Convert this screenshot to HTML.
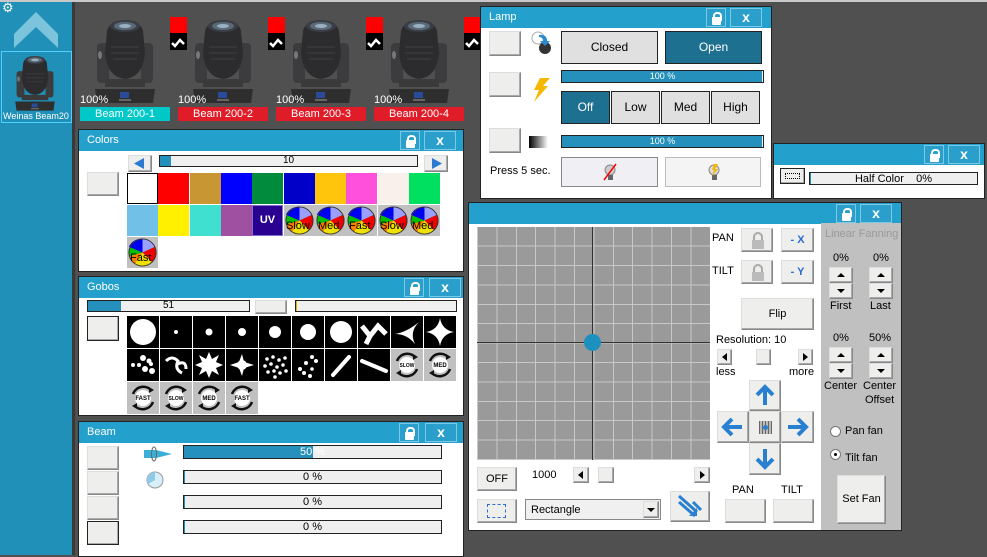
<!DOCTYPE html>
<html><head><meta charset="utf-8"><style>
*{box-sizing:border-box;margin:0;padding:0}
body{width:987px;height:555px;overflow:hidden;background:#505050;font-family:"Liberation Sans",sans-serif;font-size:11px;position:relative;color:#000}
.a{position:absolute}
.panel{position:absolute;background:#fff;border:1px solid #222}
.tb{position:absolute;left:0;right:0;top:0;height:21px;background:#24a0cc;color:#fff;font-size:11px;padding:4px 0 0 8px}
.lk{position:absolute;top:1px;width:20px;height:19px;background:#2a9fcc;border:1px solid #7fc8e4}
.lk:after{content:"";position:absolute;left:5px;top:8px;width:9px;height:8px;background:#fff;border-radius:1px}
.lk:before{content:"";position:absolute;left:6px;top:3px;width:5px;height:7px;border:2px solid #fff;border-bottom:none;border-radius:4px 4px 0 0}
.cx{position:absolute;top:1px;width:32px;height:19px;background:#2a9fcc;border:1px solid #7fc8e4;color:#fff;font-weight:bold;font-size:14px;text-align:center;line-height:17px}
.btn{position:absolute;background:#eeeeec;border:1px solid #888;border-top-color:#ddd;border-left-color:#ddd;box-shadow:inset -1px -1px 0 #aaa}
.bar{position:absolute;background:#efefef;border:1px solid #222;text-align:center;font-size:10px;line-height:10px}
.bar i{position:absolute;left:0;top:0;bottom:0;background:#2490bb}
.bar span{position:relative}
.sw{position:absolute;width:31px;height:31px}
.gb{position:absolute;width:32px;height:32px;background:#000}
.gr{position:absolute;width:32px;height:32px;background:#c0c0c0}
.tx{position:absolute;white-space:nowrap}
.lb{position:absolute;width:90px;height:14px;color:#fff;font-size:11px;text-align:center;line-height:14px}
</style></head><body>
<svg width="0" height="0" style="position:absolute"><defs>
<symbol id="lamp" viewBox="0 0 64 88">
<path d="M4 30 q0 -4 6 -4 l6 0 l0 40 l-8 0 q-4 0 -4 -6z" fill="#3c3c3e"/>
<path d="M60 30 q0 -4 -6 -4 l-6 0 l0 40 l8 0 q4 0 4 -6z" fill="#3c3c3e"/>
<ellipse cx="7" cy="38" rx="2" ry="4" fill="#777"/>
<path d="M14 14 q2 -10 18 -10 q16 0 18 10 l2 22 q-2 24 -20 26 q-18 -2 -20 -26z" fill="#2c2c2e"/>
<ellipse cx="32" cy="9" rx="15" ry="6" fill="#3a3e44"/>
<ellipse cx="32" cy="9" rx="11" ry="4" fill="#5a6a78"/>
<ellipse cx="32" cy="9" rx="6" ry="2" fill="#9ab0c0"/>
<path d="M18 30 h28 M18 36 h28 M20 42 h24" stroke="#3a3a3c" stroke-width="1.5"/>
<rect x="12" y="62" width="40" height="8" fill="#3a3a3a"/>
<path d="M2 72 L62 72 L60 86 L4 86z" fill="#2e2e2e"/>
<rect x="27" y="75" width="9" height="6" fill="#2a4a9a"/>
<rect x="26" y="82" width="12" height="2" fill="#666"/>
</symbol>
<symbol id="wheel" viewBox="0 0 32 32">
<circle cx="16" cy="16" r="14" fill="#00c000"/>
<path d="M16 16 L16 2 A14 14 0 0 1 29 10z" fill="#9aa0ff"/>
<path d="M16 16 L2 10 A14 14 0 0 1 16 2z" fill="#0000f0"/>
<path d="M16 16 L29 10 A14 14 0 0 1 26 26z" fill="#f00000"/>
<path d="M16 16 L26 26 A14 14 0 0 1 8 28z" fill="#f0e000"/>
<path d="M16 16 L8 28 A14 14 0 0 1 2 20z" fill="#ff8000"/>
<circle cx="16" cy="16" r="14" fill="none" stroke="#333"/>
</symbol>
<symbol id="rot" viewBox="0 0 32 32">
<path d="M6 12 A11 11 0 0 1 25 9" fill="none" stroke="#111" stroke-width="2.5"/>
<path d="M26 20 A11 11 0 0 1 7 23" fill="none" stroke="#111" stroke-width="2.5"/>
<path d="M22 5 l5 3 l-5 3z M10 21 l-5 3 l5 3z" fill="#111"/>
<circle cx="16" cy="16" r="8" fill="#fff"/>
</symbol>
</defs></svg>

<div class="a" style="left:0;top:0;width:987px;height:2px;background:#c8c8c8"></div>
<div class="a" style="left:0;top:2px;width:72px;height:553px;background:#2090b8"></div>
<div class="a" style="left:72px;top:2px;width:3px;height:553px;background:#3a3a3a"></div>
<div class="tx" style="left:2px;top:0;color:#fff;font-size:13px">⚙</div>
<svg class="a" style="left:14px;top:12px" width="44" height="36"><path d="M0 36 L0 22 L22 0 L44 22 L44 36 L22 15z" fill="#7cc4dc"/></svg>
<div class="a" style="left:1px;top:51px;width:71px;height:72px;border:1px solid #4fd0ff"></div>
<svg class="a" style="left:12px;top:54px" width="46" height="58"><use href="#lamp" width="46" height="58"/></svg>
<div class="tx" style="left:3px;top:111px;color:#fff;font-size:9px">Weinas Beam20</div>

<svg class="a" style="left:93px;top:17px" width="64" height="88"><use href="#lamp" width="64" height="88"/></svg>
<svg class="a" style="left:191px;top:17px" width="64" height="88"><use href="#lamp" width="64" height="88"/></svg>
<svg class="a" style="left:289px;top:17px" width="64" height="88"><use href="#lamp" width="64" height="88"/></svg>
<svg class="a" style="left:387px;top:17px" width="64" height="88"><use href="#lamp" width="64" height="88"/></svg>
<div class="a" style="left:170px;top:17px;width:17px;height:16px;background:#f00"></div><div class="a" style="left:170px;top:33px;width:17px;height:17px;background:#000"><svg width="17" height="17"><path d="M2 10 l3 3 l5 -6 l4 4" stroke="#fff" stroke-width="2.5" fill="none"/></svg></div>
<div class="a" style="left:268px;top:17px;width:17px;height:16px;background:#f00"></div><div class="a" style="left:268px;top:33px;width:17px;height:17px;background:#000"><svg width="17" height="17"><path d="M2 10 l3 3 l5 -6 l4 4" stroke="#fff" stroke-width="2.5" fill="none"/></svg></div>
<div class="a" style="left:366px;top:17px;width:17px;height:16px;background:#f00"></div><div class="a" style="left:366px;top:33px;width:17px;height:17px;background:#000"><svg width="17" height="17"><path d="M2 10 l3 3 l5 -6 l4 4" stroke="#fff" stroke-width="2.5" fill="none"/></svg></div>
<div class="a" style="left:464px;top:17px;width:17px;height:16px;background:#f00"></div><div class="a" style="left:464px;top:33px;width:17px;height:17px;background:#000"><svg width="17" height="17"><path d="M2 10 l3 3 l5 -6 l4 4" stroke="#fff" stroke-width="2.5" fill="none"/></svg></div>
<div class="tx" style="left:80px;top:94px;color:#fff">100%</div>
<div class="tx" style="left:178px;top:94px;color:#fff">100%</div>
<div class="tx" style="left:276px;top:94px;color:#fff">100%</div>
<div class="tx" style="left:374px;top:94px;color:#fff">100%</div>
<div class="lb" style="left:80px;top:107px;background:#00c8c8">Beam 200-1</div>
<div class="lb" style="left:178px;top:107px;background:#e01c28">Beam 200-2</div>
<div class="lb" style="left:276px;top:107px;background:#e01c28">Beam 200-3</div>
<div class="lb" style="left:374px;top:107px;background:#e01c28">Beam 200-4</div>

<div class="panel" style="left:78px;top:129px;width:386px;height:143px">
<div class="tb">Colors</div><div class="lk" style="left:321px"></div><div class="cx" style="left:345px">x</div>
</div>
<div class="btn" style="left:87px;top:172px;width:32px;height:24px"></div>
<div class="btn" style="left:128px;top:155px;width:24px;height:17px"><svg width="22" height="15"><path d="M5 7.5 L15 2 L15 13z" fill="#2a7ad0"/></svg></div>
<div class="bar" style="left:159px;top:155px;width:259px;height:12px"><i style="width:11px"></i><span>10</span></div>
<div class="btn" style="left:424px;top:155px;width:24px;height:17px"><svg width="22" height="15"><path d="M17 7.5 L7 2 L7 13z" fill="#2a7ad0"/></svg></div>
<div class="sw" style="left:127px;top:173px;background:#fff;border:1px solid #000"></div>
<div class="sw" style="left:158px;top:173px;background:#f00"></div>
<div class="sw" style="left:190px;top:173px;background:#c89632"></div>
<div class="sw" style="left:221px;top:173px;background:#0000ff"></div>
<div class="sw" style="left:252px;top:173px;background:#008c3c"></div>
<div class="sw" style="left:284px;top:173px;background:#0000c8"></div>
<div class="sw" style="left:315px;top:173px;background:#ffc40c"></div>
<div class="sw" style="left:346px;top:173px;background:#ff50dc"></div>
<div class="sw" style="left:378px;top:173px;background:#f8f0ea"></div>
<div class="sw" style="left:409px;top:173px;background:#00e060"></div>
<div class="sw" style="left:127px;top:205px;background:#70c0e8"></div>
<div class="sw" style="left:158px;top:205px;background:#fff000"></div>
<div class="sw" style="left:190px;top:205px;background:#40e0d0"></div>
<div class="sw" style="left:221px;top:205px;background:#a050a0"></div>
<div class="sw" style="left:252px;top:205px;background:#2a0090;border:1px solid #8070d0;color:#fff;font-weight:bold;font-size:11px;text-align:center;line-height:29px">UV</div>
<div class="sw" style="left:284px;top:205px;background:#c0c0c0"><svg width="31" height="31"><use href="#wheel" width="31" height="31"/></svg><div class="tx" style="left:2px;top:15px;font-size:11px">Slow</div></div>
<div class="sw" style="left:315px;top:205px;background:#c0c0c0"><svg width="31" height="31"><use href="#wheel" width="31" height="31"/></svg><div class="tx" style="left:3px;top:15px;font-size:11px">Med</div></div>
<div class="sw" style="left:346px;top:205px;background:#c0c0c0"><svg width="31" height="31"><use href="#wheel" width="31" height="31"/></svg><div class="tx" style="left:3px;top:15px;font-size:11px">Fast</div></div>
<div class="sw" style="left:378px;top:205px;background:#c0c0c0"><svg width="31" height="31"><use href="#wheel" width="31" height="31"/></svg><div class="tx" style="left:2px;top:15px;font-size:11px">Slow</div></div>
<div class="sw" style="left:409px;top:205px;background:#c0c0c0"><svg width="31" height="31"><use href="#wheel" width="31" height="31"/></svg><div class="tx" style="left:3px;top:15px;font-size:11px">Med</div></div>
<div class="sw" style="left:127px;top:237px;background:#c0c0c0"><svg width="31" height="31"><use href="#wheel" width="31" height="31"/></svg><div class="tx" style="left:3px;top:15px;font-size:11px">Fast</div></div>

<div class="panel" style="left:78px;top:276px;width:386px;height:140px">
<div class="tb">Gobos</div><div class="lk" style="left:325px"></div><div class="cx" style="left:350px">x</div>
</div>
<div class="bar" style="left:87px;top:300px;width:163px;height:12px"><i style="width:33px"></i><span>51</span></div>
<div class="btn" style="left:255px;top:300px;width:32px;height:14px"></div>
<div class="bar" style="left:295px;top:300px;width:162px;height:12px"><i style="width:1px;background:#e0b000"></i></div>
<div class="btn" style="left:87px;top:316px;width:32px;height:25px;border:1px solid #222"></div>
<div class="gb" style="left:127px;top:316px"><svg width="32" height="32"><circle cx="16" cy="16" r="13" fill="#fff"/></svg></div>
<div class="gb" style="left:160px;top:316px"><svg width="32" height="32"><circle cx="16" cy="16" r="2" fill="#fff"/></svg></div>
<div class="gb" style="left:193px;top:316px"><svg width="32" height="32"><circle cx="16" cy="16" r="3.5" fill="#fff"/></svg></div>
<div class="gb" style="left:226px;top:316px"><svg width="32" height="32"><circle cx="16" cy="16" r="4" fill="#fff"/></svg></div>
<div class="gb" style="left:259px;top:316px"><svg width="32" height="32"><circle cx="16" cy="16" r="6" fill="#fff"/></svg></div>
<div class="gb" style="left:292px;top:316px"><svg width="32" height="32"><circle cx="16" cy="16" r="8" fill="#fff"/></svg></div>
<div class="gb" style="left:325px;top:316px"><svg width="32" height="32"><circle cx="16" cy="16" r="11" fill="#fff"/></svg></div>
<div class="gb" style="left:358px;top:316px"><svg width="32" height="32"><path d="M4 10 L12 20 L20 10 L28 18 M8 28 L12 20" stroke="#fff" stroke-width="5" fill="none"/></svg></div>
<div class="gb" style="left:391px;top:316px"><svg width="32" height="32"><path d="M28 6 Q16 16 4 18 Q16 18 24 28 Q18 16 28 6z" fill="#fff"/></svg></div>
<div class="gb" style="left:424px;top:316px"><svg width="32" height="32"><path d="M16 2 Q18 14 30 16 Q18 18 16 30 Q14 18 2 16 Q14 14 16 2z" fill="#fff"/></svg></div>
<div class="gb" style="left:127px;top:349px"><svg width="32" height="32"><g fill="#fff"><circle cx="16" cy="9" r="3"/><circle cx="22" cy="12" r="2.5"/><circle cx="12" cy="16" r="2"/><circle cx="6" cy="16" r="2"/><circle cx="18" cy="20" r="3"/><circle cx="25" cy="22" r="3"/><circle cx="24" cy="15" r="2"/></g></svg></div>
<div class="gb" style="left:160px;top:349px"><svg width="32" height="32"><path d="M6 12 Q12 6 18 12 Q14 20 22 24 M16 16 Q26 10 26 20" stroke="#fff" stroke-width="3" fill="none"/></svg></div>
<div class="gb" style="left:193px;top:349px"><svg width="32" height="32"><polygon points="16,3 19,10 26,6 23,13 30,16 23,19 26,26 19,22 16,29 13,22 6,26 9,19 2,16 9,13 6,6 13,10" fill="#fff"/></svg></div>
<div class="gb" style="left:226px;top:349px"><svg width="32" height="32"><polygon points="16,5 18,13 28,16 18,19 16,27 13,19 4,16 13,13" fill="#fff"/><circle cx="16" cy="16" r="5" fill="#fff"/></svg></div>
<div class="gb" style="left:259px;top:349px"><svg width="32" height="32"><g fill="#fff"><circle cx="8" cy="10" r="1.8"/><circle cx="14" cy="8" r="1.8"/><circle cx="20" cy="11" r="1.8"/><circle cx="26" cy="9" r="1.8"/><circle cx="6" cy="17" r="1.8"/><circle cx="12" cy="15" r="1.8"/><circle cx="18" cy="18" r="1.8"/><circle cx="24" cy="16" r="1.8"/><circle cx="9" cy="23" r="1.8"/><circle cx="15" cy="22" r="1.8"/><circle cx="21" cy="24" r="1.8"/><circle cx="27" cy="22" r="1.8"/><circle cx="16" cy="28" r="1.8"/></g></svg></div>
<div class="gb" style="left:292px;top:349px"><svg width="32" height="32"><g fill="#fff"><circle cx="20" cy="8" r="2"/><circle cx="24" cy="12" r="2"/><circle cx="14" cy="14" r="2"/><circle cx="8" cy="20" r="2"/><circle cx="20" cy="20" r="1.8"/><circle cx="12" cy="24" r="2"/><circle cx="18" cy="27" r="2"/></g></svg></div>
<div class="gb" style="left:325px;top:349px"><svg width="32" height="32"><path d="M8 26 L24 8" stroke="#fff" stroke-width="4" stroke-linecap="round"/></svg></div>
<div class="gb" style="left:358px;top:349px"><svg width="32" height="32"><path d="M4 12 L28 22" stroke="#fff" stroke-width="4" stroke-linecap="round"/></svg></div>
<div class="gr" style="left:391px;top:349px"><svg width="32" height="32"><use href="#rot" width="32" height="32"/><text x="16" y="18" font-size="5" text-anchor="middle" font-weight="bold" font-family="Liberation Sans">SLOW</text></svg></div>
<div class="gr" style="left:424px;top:349px"><svg width="32" height="32"><use href="#rot" width="32" height="32"/><text x="16" y="18" font-size="6" text-anchor="middle" font-weight="bold" font-family="Liberation Sans">MED</text></svg></div>
<div class="gr" style="left:127px;top:382px"><svg width="32" height="32"><use href="#rot" width="32" height="32"/><text x="16" y="18" font-size="6" text-anchor="middle" font-weight="bold" font-family="Liberation Sans">FAST</text></svg></div>
<div class="gr" style="left:160px;top:382px"><svg width="32" height="32"><use href="#rot" width="32" height="32"/><text x="16" y="18" font-size="5" text-anchor="middle" font-weight="bold" font-family="Liberation Sans">SLOW</text></svg></div>
<div class="gr" style="left:193px;top:382px"><svg width="32" height="32"><use href="#rot" width="32" height="32"/><text x="16" y="18" font-size="6" text-anchor="middle" font-weight="bold" font-family="Liberation Sans">MED</text></svg></div>
<div class="gr" style="left:226px;top:382px"><svg width="32" height="32"><use href="#rot" width="32" height="32"/><text x="16" y="18" font-size="6" text-anchor="middle" font-weight="bold" font-family="Liberation Sans">FAST</text></svg></div>

<div class="panel" style="left:78px;top:421px;width:386px;height:136px">
<div class="tb">Beam</div><div class="lk" style="left:320px"></div><div class="cx" style="left:346px">x</div>
</div>
<div class="btn" style="left:87px;top:446px;width:32px;height:24px"></div>
<div class="btn" style="left:87px;top:471px;width:32px;height:24px"></div>
<div class="btn" style="left:87px;top:496px;width:32px;height:24px"></div>
<div class="btn" style="left:87px;top:521px;width:32px;height:24px;border:1px solid #222"></div>
<svg class="a" style="left:144px;top:446px" width="30" height="16"><path d="M0 4 L12 4 L28 8 L12 12 L0 12z" fill="#3ab0d8"/><ellipse cx="10" cy="8" rx="2.5" ry="7" fill="none" stroke="#666"/></svg>
<svg class="a" style="left:145px;top:470px" width="20" height="20"><circle cx="10" cy="10" r="8" fill="#d8eef8" stroke="#999"/><path d="M10 10 L10 2 A8 8 0 0 0 3 14z" fill="#8fcbe6"/></svg>
<div class="bar" style="left:183px;top:445px;width:259px;height:14px;font-size:11px;line-height:12px"><i style="width:129px"></i><span style="color:#fff">50 %</span></div>
<div class="bar" style="left:183px;top:470px;width:259px;height:14px;font-size:11px;line-height:12px"><i style="width:1px"></i><span>0 %</span></div>
<div class="bar" style="left:183px;top:495px;width:259px;height:14px;font-size:11px;line-height:12px"><i style="width:1px"></i><span>0 %</span></div>
<div class="bar" style="left:183px;top:520px;width:259px;height:14px;font-size:11px;line-height:12px"><i style="width:1px"></i><span>0 %</span></div>

<div class="panel" style="left:480px;top:6px;width:292px;height:193px">
<div class="tb">Lamp</div><div class="lk" style="left:225px"></div><div class="cx" style="left:249px">x</div>
</div>
<div class="btn" style="left:489px;top:31px;width:32px;height:25px"></div>
<div class="btn" style="left:489px;top:72px;width:32px;height:25px"></div>
<div class="btn" style="left:489px;top:128px;width:32px;height:25px"></div>
<svg class="a" style="left:529px;top:31px" width="24" height="24"><circle cx="9" cy="7" r="6" fill="#fff" stroke="#aaa"/><circle cx="16" cy="17" r="6" fill="#333"/><path d="M10 4 Q18 3 18 10 L21 10 L16 15 L11 10 L14 10 Q14 6 10 6z" fill="#2a8ad0"/></svg>
<svg class="a" style="left:530px;top:78px" width="22" height="24"><path d="M10 0 L20 0 L13 8 L18 8 L4 24 L9 12 L4 12z" fill="#f5b800"/></svg>
<div class="a" style="left:529px;top:136px;width:19px;height:12px;background:linear-gradient(90deg,#000,#fff)"></div>
<div class="btn" style="left:561px;top:31px;width:97px;height:33px;background:#e0e0e0;border:1px solid #222;box-shadow:none;font-size:12px;text-align:center;line-height:31px">Closed</div>
<div class="a" style="left:665px;top:31px;width:97px;height:33px;background:#1e7090;border:1px solid #222;color:#fff;font-size:12px;text-align:center;line-height:31px">Open</div>
<div class="bar" style="left:561px;top:70px;width:203px;height:13px;font-size:9px"><i style="width:200px"></i><span style="color:#fff">100 %</span></div>
<div class="a" style="left:561px;top:91px;width:49px;height:33px;background:#1e7090;border:1px solid #222;color:#fff;font-size:12px;text-align:center;line-height:31px">Off</div>
<div class="a" style="left:611px;top:91px;width:49px;height:33px;background:#e0e0e0;border:1px solid #222;font-size:12px;text-align:center;line-height:31px">Low</div>
<div class="a" style="left:661px;top:91px;width:49px;height:33px;background:#e0e0e0;border:1px solid #222;font-size:12px;text-align:center;line-height:31px">Med</div>
<div class="a" style="left:711px;top:91px;width:49px;height:33px;background:#e0e0e0;border:1px solid #222;font-size:12px;text-align:center;line-height:31px">High</div>
<div class="bar" style="left:561px;top:135px;width:203px;height:13px;font-size:9px"><i style="width:200px"></i><span style="color:#fff">100 %</span></div>
<div class="tx" style="left:490px;top:165px;font-size:11px">Press 5 sec.</div>
<div class="a" style="left:561px;top:157px;width:97px;height:30px;background:#f0f0f4;border:1px solid #888"><svg style="position:absolute;left:38px;top:4px" width="20" height="20"><circle cx="10" cy="8" r="5" fill="#ccc" stroke="#888"/><rect x="8" y="13" width="5" height="5" fill="#666"/><path d="M4 18 L16 2" stroke="#f00" stroke-width="1.5"/></svg></div>
<div class="a" style="left:665px;top:157px;width:96px;height:30px;background:#f4f4f4;border:1px solid #bbb"><svg style="position:absolute;left:38px;top:4px" width="20" height="20"><circle cx="10" cy="8" r="5" fill="#ddd" stroke="#888"/><rect x="8" y="13" width="5" height="5" fill="#666"/><path d="M10 2 L14 2 L11 7 L14 7 L8 14 L10 8 L8 8z" fill="#f5b800"/></svg></div>

<div class="panel" style="left:773px;top:143px;width:212px;height:56px">
<div class="tb"></div><div class="lk" style="left:150px"></div><div class="cx" style="left:174px">x</div>
</div>
<div class="btn" style="left:780px;top:168px;width:25px;height:16px;border:1px solid #222"><div class="a" style="left:4px;top:4px;width:15px;height:6px;border:1px dotted #000"></div></div>
<div class="bar" style="left:809px;top:172px;width:169px;height:13px;font-size:11px;line-height:12px"><i style="width:1px"></i><span>Half Color &nbsp;&nbsp; 0%</span></div>

<div class="panel" style="left:468px;top:202px;width:434px;height:329px">
<div class="tb"></div><div class="lk" style="left:367px"></div><div class="cx" style="left:391px">x</div>
</div>
<div class="a" style="left:821px;top:223px;width:80px;height:307px;background:#c0c0c0"></div>
<div class="a" style="left:477px;top:227px;width:233px;height:233px;background-color:#9a9a9a;background-image:repeating-linear-gradient(90deg,#c8c8c8 0 1px,transparent 1px 19.4px),repeating-linear-gradient(0deg,#c8c8c8 0 1px,transparent 1px 19.4px)"></div>
<div class="a" style="left:592px;top:227px;width:1px;height:233px;background:#333"></div>
<div class="a" style="left:477px;top:342px;width:233px;height:1px;background:#333"></div>
<div class="a" style="left:584px;top:334px;width:17px;height:17px;border-radius:50%;background:#1e90c0"></div>
<div class="tx" style="left:712px;top:232px;font-size:11px">PAN</div>
<div class="tx" style="left:712px;top:265px;font-size:11px">TILT</div>
<div class="btn" style="left:741px;top:228px;width:32px;height:24px"><svg style="position:absolute;left:9px;top:2px" width="14" height="19"><path d="M3 9 V6 a4 4 0 0 1 8 0 V9" stroke="#aaa" stroke-width="2" fill="none"/><rect x="1" y="9" width="12" height="9" fill="#bbb"/></svg></div>
<div class="btn" style="left:741px;top:260px;width:32px;height:24px"><svg style="position:absolute;left:9px;top:2px" width="14" height="19"><path d="M3 9 V6 a4 4 0 0 1 8 0 V9" stroke="#aaa" stroke-width="2" fill="none"/><rect x="1" y="9" width="12" height="9" fill="#bbb"/></svg></div>
<div class="btn" style="left:781px;top:228px;width:33px;height:24px;color:#2a6ad0;font-weight:bold;font-size:11px;text-align:center;line-height:22px">- X</div>
<div class="btn" style="left:781px;top:260px;width:33px;height:24px;color:#2a6ad0;font-weight:bold;font-size:11px;text-align:center;line-height:22px">- Y</div>
<div class="btn" style="left:741px;top:298px;width:73px;height:32px;font-size:11px;text-align:center;line-height:30px">Flip</div>
<div class="tx" style="left:716px;top:334px;font-size:11px">Resolution: 10</div>
<div class="btn" style="left:717px;top:349px;width:15px;height:16px"><svg width="13" height="14"><path d="M4 7 L9 3 L9 11z"/></svg></div>
<div class="btn" style="left:756px;top:349px;width:15px;height:16px"></div>
<div class="btn" style="left:798px;top:349px;width:15px;height:16px"><svg width="13" height="14"><path d="M9 7 L4 3 L4 11z"/></svg></div>
<div class="tx" style="left:716px;top:366px;font-size:11px">less</div>
<div class="tx" style="left:789px;top:366px;font-size:11px">more</div>
<div class="btn" style="left:749px;top:380px;width:32px;height:31px"><svg width="30" height="29"><path d="M15 24 V8 M7 14 L15 6 L23 14" stroke="#2a80d0" stroke-width="4" fill="none"/></svg></div>
<div class="btn" style="left:717px;top:411px;width:32px;height:32px"><svg width="30" height="30"><path d="M24 15 H8 M14 7 L6 15 L14 23" stroke="#2a80d0" stroke-width="4" fill="none"/></svg></div>
<div class="btn" style="left:749px;top:411px;width:32px;height:32px"><div class="a" style="left:9px;top:9px;width:13px;height:13px;background:repeating-linear-gradient(90deg,#666 0 1px,#bbb 1px 3px)"></div><div class="a" style="left:13px;top:13px;width:5px;height:5px;border-radius:50%;background:#2a80d0"></div></div>
<div class="btn" style="left:781px;top:411px;width:33px;height:32px"><svg width="30" height="30"><path d="M6 15 H22 M16 7 L24 15 L16 23" stroke="#2a80d0" stroke-width="4" fill="none"/></svg></div>
<div class="btn" style="left:749px;top:443px;width:32px;height:32px"><svg width="30" height="30"><path d="M15 5 V21 M7 15 L15 23 L23 15" stroke="#2a80d0" stroke-width="4" fill="none"/></svg></div>
<div class="tx" style="left:732px;top:484px;font-size:11px">PAN</div>
<div class="tx" style="left:781px;top:484px;font-size:11px">TILT</div>
<div class="btn" style="left:725px;top:499px;width:41px;height:24px"></div>
<div class="btn" style="left:773px;top:499px;width:41px;height:24px"></div>
<div class="btn" style="left:477px;top:467px;width:40px;height:24px;font-size:11px;text-align:center;line-height:22px">OFF</div>
<div class="tx" style="left:532px;top:469px;font-size:11px">1000</div>
<div class="btn" style="left:573px;top:467px;width:16px;height:16px"><svg width="14" height="14"><path d="M4 7 L9 3 L9 11z"/></svg></div>
<div class="btn" style="left:598px;top:467px;width:16px;height:16px"></div>
<div class="btn" style="left:694px;top:467px;width:16px;height:16px"><svg width="14" height="14"><path d="M10 7 L5 3 L5 11z"/></svg></div>
<div class="btn" style="left:477px;top:499px;width:40px;height:24px"><div class="a" style="left:9px;top:4px;width:19px;height:14px;border:1px dashed #2a70d0"></div></div>
<div class="a" style="left:525px;top:499px;width:136px;height:21px;background:#f0f0f0;border:1px solid #888;font-size:11px;padding:4px 0 0 5px">Rectangle<div class="btn" style="left:117px;top:1px;width:16px;height:17px"><svg width="14" height="15"><path d="M3 6 L11 6 L7 10z"/></svg></div></div>
<div class="btn" style="left:670px;top:491px;width:40px;height:31px"><svg width="38" height="29"><path d="M8 4 L26 20 M22 10 L30 18 M8 10 L24 24" stroke="#2a80d0" stroke-width="3" fill="none"/><path d="M26 24 L18 24 L26 16z" fill="#2a80d0"/></svg></div>
<div class="tx" style="left:825px;top:228px;font-size:11px;color:#999">Linear Fanning</div>
<div class="tx" style="left:833px;top:252px;font-size:11px">0%</div>
<div class="tx" style="left:873px;top:252px;font-size:11px">0%</div>
<div class="btn" style="left:829px;top:267px;width:24px;height:16px"><svg width="22" height="14"><path d="M7 9 L15 9 L11 5z"/></svg></div>
<div class="btn" style="left:829px;top:283px;width:24px;height:16px"><svg width="22" height="14"><path d="M7 5 L15 5 L11 9z"/></svg></div>
<div class="btn" style="left:869px;top:267px;width:24px;height:16px"><svg width="22" height="14"><path d="M7 9 L15 9 L11 5z"/></svg></div>
<div class="btn" style="left:869px;top:283px;width:24px;height:16px"><svg width="22" height="14"><path d="M7 5 L15 5 L11 9z"/></svg></div>
<div class="tx" style="left:830px;top:300px;font-size:11px">First</div>
<div class="tx" style="left:870px;top:300px;font-size:11px">Last</div>
<div class="tx" style="left:833px;top:332px;font-size:11px">0%</div>
<div class="tx" style="left:869px;top:332px;font-size:11px">50%</div>
<div class="btn" style="left:829px;top:347px;width:24px;height:16px"><svg width="22" height="14"><path d="M7 9 L15 9 L11 5z"/></svg></div>
<div class="btn" style="left:829px;top:363px;width:24px;height:16px"><svg width="22" height="14"><path d="M7 5 L15 5 L11 9z"/></svg></div>
<div class="btn" style="left:869px;top:347px;width:24px;height:16px"><svg width="22" height="14"><path d="M7 9 L15 9 L11 5z"/></svg></div>
<div class="btn" style="left:869px;top:363px;width:24px;height:16px"><svg width="22" height="14"><path d="M7 5 L15 5 L11 9z"/></svg></div>
<div class="tx" style="left:824px;top:380px;font-size:11px">Center</div>
<div class="tx" style="left:863px;top:380px;font-size:11px">Center</div>
<div class="tx" style="left:865px;top:394px;font-size:11px">Offset</div>
<div class="a" style="left:830px;top:426px;width:11px;height:11px;border-radius:50%;background:#fff;border:1px solid #777"></div>
<div class="tx" style="left:845px;top:425px;font-size:11px">Pan fan</div>
<div class="a" style="left:830px;top:449px;width:11px;height:11px;border-radius:50%;background:#fff;border:1px solid #777"><div class="a" style="left:3px;top:3px;width:3px;height:3px;border-radius:50%;background:#000"></div></div>
<div class="tx" style="left:845px;top:452px;font-size:11px">Tilt fan</div>
<div class="btn" style="left:837px;top:475px;width:49px;height:49px;font-size:11px;text-align:center;line-height:47px">Set Fan</div>
</body></html>
